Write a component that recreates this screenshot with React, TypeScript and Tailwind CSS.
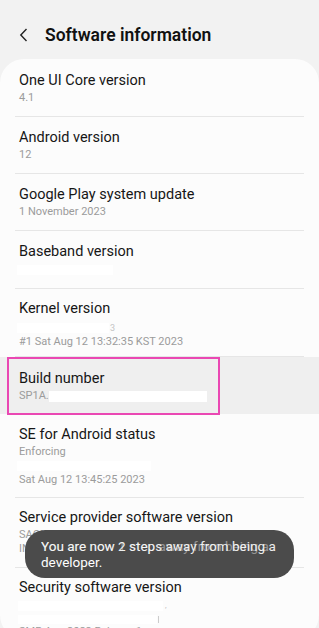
import React from 'react'

const font = { fontFamily: 'Roboto, "Noto Sans", sans-serif' }

const Divider = () => <div className="mx-[15px] h-px bg-[#e6e6e6]" />

const Title = ({ children }: { children: React.ReactNode }) => (
    <div className="text-[14.5px] leading-[20px] text-[#161616]">{children}</div>
)

const Sub = ({ children }: { children: React.ReactNode }) => (
    <div className="text-[11px] leading-[14px] text-[#9b9b9b]">{children}</div>
)

const Blank = ({ w, h = 10, extra }: { w: string; h?: number; extra?: React.ReactNode }) => (
    <div className="flex items-center gap-0">
        <div className={`${w} bg-white`} style={{ height: h }} />
        {extra}
    </div>
)

export default function App() {
    return (
        <div style={font} className="relative w-[319px] h-[628px] overflow-hidden bg-[#f2f2f2]">
            {/* header */}
            <div className="h-[59px] flex items-center pl-[19px] pt-[11px]">
                <svg width="10" height="14" viewBox="0 0 10 14" className="mr-[16px]">
                    <path d="M7.5 1 L1.8 7 L7.5 13" fill="none" stroke="#222" strokeWidth="1.4" />
                </svg>
                <h1 className="text-[17.5px] font-semibold text-[#111]">Software information</h1>
            </div>

            {/* card */}
            <div className="bg-[#fcfcfc] rounded-[24px] h-[580px] overflow-hidden">
                <div className="px-[19px] pt-[12px] pb-[11px]">
                    <Title>One UI Core version</Title>
                    <Sub>4.1</Sub>
                </div>
                <Divider />
                <div className="px-[19px] pt-[11px] pb-[11px]">
                    <Title>Android version</Title>
                    <Sub>12</Sub>
                </div>
                <Divider />
                <div className="px-[19px] pt-[11px] pb-[11px]">
                    <Title>Google Play system update</Title>
                    <Sub>1 November 2023</Sub>
                </div>
                <Divider />
                <div className="pl-[17px] pr-[19px] pt-[11px] pb-[13px]">
                    <div className="pl-[2px]"><Title>Baseband version</Title></div>
                    <div className="mt-[3px]"><Blank w="w-[96px]" /></div>
                </div>
                <Divider />
                <div className="pl-[17px] pr-[19px] pt-[10px] pb-[7px]">
                    <div className="pl-[2px]"><Title>Kernel version</Title></div>
                    <div className="mt-[2px] h-[14px] flex items-center">
                        <Blank w="w-[92px]" extra={<span className="text-[9px] leading-none text-[#c4c4c4] ml-px">3</span>} />
                    </div>
                    <div className="pl-[2px]"><Sub>#1 Sat Aug 12 13:32:35 KST 2023</Sub></div>
                </div>
                <Divider />
                <div className="relative bg-[#efefef] pl-[19px] pr-[19px] pt-[12px] pb-[11px]">
                    <Title>Build number</Title>
                    <div className="flex items-center h-[14px]">
                        <Sub>SP1A.</Sub>
                        <div className="w-[158px] h-[11px] bg-white" />
                    </div>
                    <div className="absolute left-[7px] top-0 w-[213px] h-[58px] border-[2.5px] border-[#ea48b3]" />
                </div>
                <div className="pl-[17px] pr-[19px] pt-[11px] pb-[10px]">
                    <div className="pl-[2px]"><Title>SE for Android status</Title></div>
                    <div className="pl-[2px]"><Sub>Enforcing</Sub></div>
                    <div className="mt-[2px]"><Blank w="w-[134px]" /></div>
                    <div className="pl-[2px] mt-[2px]"><Sub>Sat Aug 12 13:45:25 2023</Sub></div>
                </div>
                <Divider />
                <div className="px-[19px] pt-[10px] pb-[11px]">
                    <Title>Service provider software version</Title>
                    <Sub>SAOMC_SM-M315F_ODI_INU_12_0011</Sub>
                    <Sub>INU/INU/INU/INU</Sub>
                </div>
                <Divider />
                <div className="pl-[18px] pr-[19px] pt-[10px]">
                    <div className="pl-px"><Title>Security software version</Title></div>
                    <div className="mt-[3px]"><Blank w="w-[145px]" extra={<span className="text-[8px] leading-none text-[#bbb] ml-[2px]">,</span>} /></div>
                    <div className="mt-[4px]"><Blank w="w-[139px]" h={9} extra={<span className="w-px h-[7px] bg-[#ccc] ml-[1px]" />} /></div>
                    <div className="pl-px mt-px"><Sub>SMR Aug-2023 Release 1</Sub></div>
                </div>
            </div>

            {/* toast */}
            <div className="absolute left-[25px] top-[530px] w-[269px] h-[48px] rounded-[20px] bg-[#4b4b4b] pl-[16px] pr-[8px] pt-[8px] text-[13.5px] leading-[16px] text-white whitespace-nowrap">
                <div className="relative">
                    <div className="opacity-90">You are now 2 steps away from being a</div>
                    <div className="absolute left-0 top-0 opacity-40">You are now 1 step away from being a</div>
                </div>
                <div>developer.</div>
            </div>
        </div>
    )
}
